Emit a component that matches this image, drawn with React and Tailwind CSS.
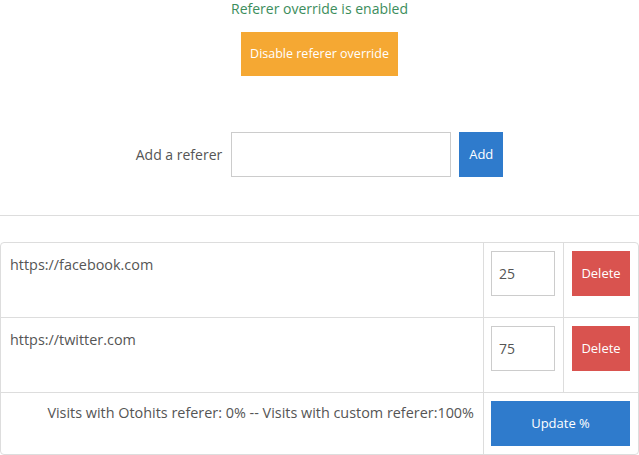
import React from 'react';

const referers = [
  { url: 'https://facebook.com', pct: '25' },
  { url: 'https://twitter.com', pct: '75' },
];

const App = () => {
  return (
    <div className="w-[639px] h-[455px] bg-white text-[#555] text-[14px] overflow-hidden" style={{ fontFamily: '"Open Sans", "Liberation Sans", sans-serif' }}>
      {/* Status and toggle */}
      <div className="flex flex-col items-center">
        <p className="text-[#3c8d5c] leading-[18px]">Referer override is enabled</p>
        <button className="mt-[14px] w-[157px] h-[44px] bg-[#f5a833] text-white text-[12.5px]">
          Disable referer override
        </button>
      </div>

      {/* Add form */}
      <div className="flex items-center justify-center mt-[56px]">
        <label className="mr-[9px]">Add a referer</label>
        <input className="w-[220px] h-[45px] border border-[#ccc] outline-none" />
        <button className="ml-[8px] w-[44px] h-[45px] bg-[#2f7bcc] text-white text-[13px]">Add</button>
      </div>

      <hr className="mt-[38px] border-t border-[#ddd]" />

      {/* Referers table */}
      <div className="mt-[26px] w-[639px] border border-[#ddd] rounded-[4px] grid grid-cols-[483px_80px_1fr] text-[14.4px]">
        {referers.map((r) => (
          <React.Fragment key={r.url}>
            <div className="h-[75px] border-b border-r border-[#ddd] pl-[9px] pt-[12px] leading-[20px]">{r.url}</div>
            <div className="h-[75px] border-b border-r border-[#ddd] pl-[7px] pt-[8px]">
              <input defaultValue={r.pct} className="w-[64px] h-[45px] border border-[#ccc] px-[7px] text-[14px] outline-none" />
            </div>
            <div className="h-[75px] border-b border-[#ddd] pl-[8px] pt-[8px]">
              <button className="w-[58px] h-[45px] bg-[#d9534f] text-white text-[13px]">Delete</button>
            </div>
          </React.Fragment>
        ))}
        <div className="h-[61px] border-r border-[#ddd] pr-[9px] pt-[10px] text-right leading-[20px]">
          Visits with Otohits referer: 0% -- Visits with custom referer:100%
        </div>
        <div className="col-span-2 pl-[7px] pt-[8px]">
          <button className="w-[139px] h-[45px] bg-[#2f7bcc] text-white text-[13px]">Update %</button>
        </div>
      </div>
    </div>
  );
};

export default App;
